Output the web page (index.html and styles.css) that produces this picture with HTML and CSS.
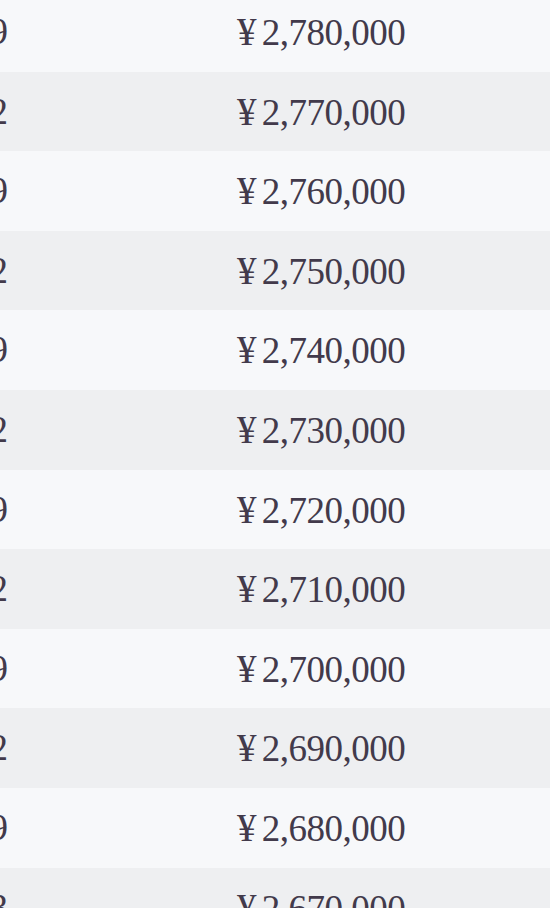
FILE: index.html
```html
<!DOCTYPE html>
<html lang="zh">
<head>
<meta charset="utf-8">
<title>价格表</title>
<link rel="stylesheet" href="styles.css">
</head>
<body>
<div class="table">
  <div class="row"><span class="year">2019</span><span class="price"><span class="yen">¥</span> 2,780,000</span></div>
  <div class="row"><span class="year">2022</span><span class="price"><span class="yen">¥</span> 2,770,000</span></div>
  <div class="row"><span class="year">2019</span><span class="price"><span class="yen">¥</span> 2,760,000</span></div>
  <div class="row"><span class="year">2022</span><span class="price"><span class="yen">¥</span> 2,750,000</span></div>
  <div class="row"><span class="year">2019</span><span class="price"><span class="yen">¥</span> 2,740,000</span></div>
  <div class="row"><span class="year">2022</span><span class="price"><span class="yen">¥</span> 2,730,000</span></div>
  <div class="row"><span class="year">2019</span><span class="price"><span class="yen">¥</span> 2,720,000</span></div>
  <div class="row"><span class="year">2022</span><span class="price"><span class="yen">¥</span> 2,710,000</span></div>
  <div class="row"><span class="year">2019</span><span class="price"><span class="yen">¥</span> 2,700,000</span></div>
  <div class="row"><span class="year">2022</span><span class="price"><span class="yen">¥</span> 2,690,000</span></div>
  <div class="row"><span class="year">2019</span><span class="price"><span class="yen">¥</span> 2,680,000</span></div>
  <div class="row"><span class="year">2023</span><span class="price"><span class="yen">¥</span> 2,670,000</span></div>
</div>
</body>
</html>
```
FILE: styles.css
```css
html, body {
  margin: 0;
  padding: 0;
  background: #f7f8fa;
  overflow: hidden;
  height: 908px;
}
.table {
  margin-top: -9px;
  margin-left: -92px;
  width: 642px;
  border-top: 1px solid #e6e8ec;
}
.row {
  display: grid;
  grid-template-columns: 100px 1fr;
  height: 79.6px;
  line-height: 79.6px;
  font-family: "Liberation Serif", "Times New Roman", serif;
  font-size: 37px;
  color: #423a4b;
  background: #f7f8fa;
}
.row:nth-child(even) {
  background: #eeeff1;
}
.year {
  text-align: right;
  white-space: nowrap;
}
.price {
  padding-left: 229px;
  white-space: nowrap;
  word-spacing: -3px;
  letter-spacing: -0.5px;
}
.yen {
  font-size: 39px;
}
```
